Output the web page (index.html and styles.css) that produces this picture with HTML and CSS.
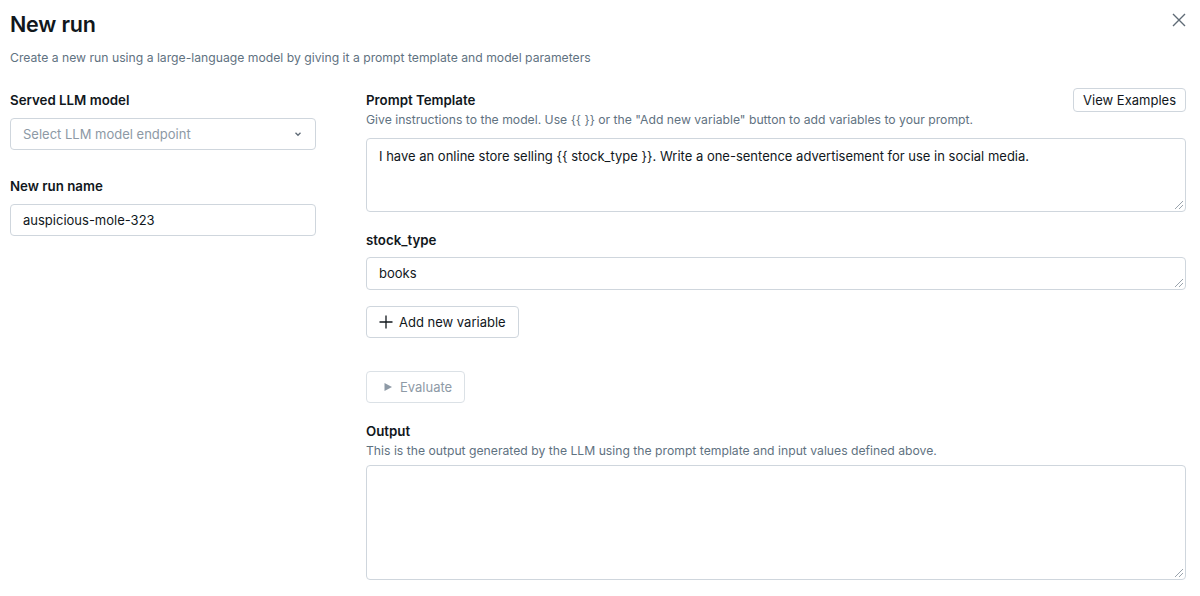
FILE: index.html
```html
<!DOCTYPE html>
<html>
<head>
<meta charset="utf-8">
<link rel="stylesheet" href="styles.css">
</head>
<body>
<div class="modal">
  <header class="head">
    <h1 class="title">New run</h1>
    <button class="close" aria-label="Close">
      <svg width="14" height="14" viewBox="0 0 14 14"><path d="M1 1L13 13M13 1L1 13" stroke="#5f6b76" stroke-width="1.4" fill="none"/></svg>
    </button>
  </header>
  <p class="subtitle">Create a new run using a large-language model by giving it a prompt template and model parameters</p>
  <div class="cols">
    <div class="left">
      <label class="label">Served LLM model</label>
      <div class="select">
        <span class="placeholder">Select LLM model endpoint</span>
        <svg width="10" height="10" viewBox="0 0 10 10"><path d="M2.5 3.8L5 6.3L7.5 3.8" stroke="#5f6b76" stroke-width="1.3" fill="none"/></svg>
      </div>
      <label class="label mt">New run name</label>
      <div class="input">auspicious-mole-323</div>
    </div>
    <div class="right">
      <div class="row-between">
        <label class="label">Prompt Template</label>
        <button class="btn small">View Examples</button>
      </div>
      <p class="desc">Give instructions to the model. Use {{ }} or the "Add new variable" button to add variables to your prompt.</p>
      <div class="textarea prompt">I have an online store selling {{ stock_type }}. Write a one-sentence advertisement for use in social media.<span class="grip"></span></div>
      <label class="label mt2">stock_type</label>
      <div class="textarea var">books<span class="grip"></span></div>
      <button class="btn add">
        <svg width="14" height="14" viewBox="0 0 14 14"><path d="M7 0.5V13.5M0.5 7H13.5" stroke="#11171c" stroke-width="1.3" fill="none"/></svg>
        Add new variable
      </button>
      <button class="btn eval" disabled>
        <svg width="10" height="10" viewBox="0 0 10 10"><path d="M1.5 1L9 5L1.5 9Z" fill="#8e9aa6"/></svg>
        Evaluate
      </button>
      <label class="label out">Output</label>
      <p class="desc">This is the output generated by the LLM using the prompt template and input values defined above.</p>
      <div class="textarea output"><span class="grip"></span></div>
    </div>
  </div>
</div>
</body>
</html>
```
FILE: styles.css
```css
* { box-sizing: border-box; }
html, body { margin: 0; padding: 0; background: #fff; }
body {
  font-family: Inter, "Helvetica Neue", Arial, sans-serif;
  color: #11171c;
  font-size: 13px;
}
.modal { padding: 10px 14px 0 10px; width: 1200px; }
.head { display: flex; justify-content: space-between; align-items: flex-start; }
.title { margin: 0; font-size: 21.5px; font-weight: 600; line-height: 28px; letter-spacing: -0.2px; }
.close { border: 0; background: none; padding: 0; margin: 1px -2px 0 0; width: 18px; height: 18px; display: flex; align-items: center; justify-content: center; }
.subtitle { margin: 11px 0 0; color: #5f7281; font-size: 12.2px; line-height: 18px; }
.cols { display: flex; gap: 50px; margin-top: 23px; }
.left { width: 306px; display: flex; flex-direction: column; }
.right { flex: 1; display: flex; flex-direction: column; align-items: flex-start; }
.label { font-size: 13.3px; font-weight: 600; line-height: 20px; display: block; }
.mt { margin-top: 26px; }
.mt2 { margin-top: 18px; }
.select, .input {
  height: 32px; border: 1px solid #cfd6dd; border-radius: 4px;
  display: flex; align-items: center; padding: 0 12px; font-size: 13px;
  margin-top: 8px;
}
.select { justify-content: space-between; padding-right: 12px; }
.placeholder { color: #8d99a5; }
.row-between { display: flex; justify-content: space-between; align-items: center; width: 100%; height: 20px; }
.btn {
  font-family: inherit; font-size: 13px; color: #11171c; background: #fff;
  border: 1px solid #cfd6dd; border-radius: 4px; display: inline-flex; align-items: center; gap: 6px;
}
.btn.small { height: 24px; padding: 0 9px; flex-shrink: 0; }
.desc { margin: 0; color: #5f7281; font-size: 12.2px; line-height: 18px; }
.right > .desc { margin-top: 1px; }
.textarea {
  width: 100%; border: 1px solid #cfd6dd; border-radius: 4px; position: relative;
  padding: 7px 12px; font-size: 13px; line-height: 20px;
}
.prompt { height: 74px; margin-top: 9px; }
.var { height: 33px; margin-top: 7px; padding-top: 5px; }
.output { height: 115px; margin-top: 5px; }
.grip {
  position: absolute; right: 2px; bottom: 2px; width: 8px; height: 8px;
  background: linear-gradient(135deg, transparent 45%, #9aa4ad 45%, #9aa4ad 55%, transparent 55%, transparent 70%, #9aa4ad 70%, #9aa4ad 80%, transparent 80%);
}
.btn.add { height: 32px; padding: 0 12px 0 12px; margin-top: 16px; }
.btn.eval { height: 32px; padding: 0 12px 0 16px; margin-top: 33px; color: #8e9aa6; border-color: #dbe1e6; gap: 7px; }
.label.out { margin-top: 18px; }
```
